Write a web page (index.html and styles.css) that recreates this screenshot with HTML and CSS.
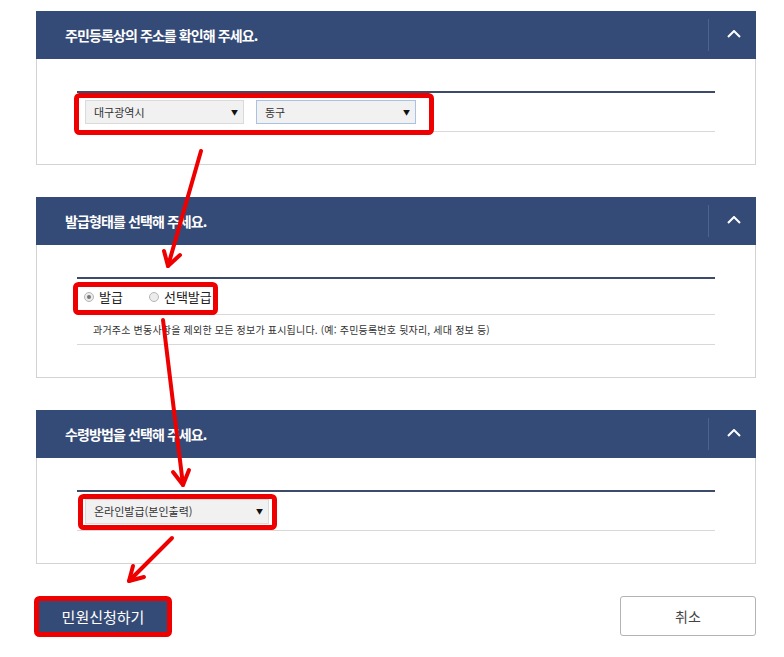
FILE: index.html
```html
<!DOCTYPE html>
<html lang="ko">
<head>
<meta charset="utf-8">
<title>민원신청</title>
<link rel="stylesheet" href="styles.css">
</head>
<body>
<div class="page">
  <section class="panel">
    <div class="panel-head">
      <h2 class="panel-title">주민등록상의 주소를 확인해 주세요.</h2>
      <div class="toggle"><svg width="14" height="8" viewBox="0 0 14 8"><polyline points="1,7 7,1 13,7" fill="none" stroke="#fff" stroke-width="2"/></svg></div>
    </div>
    <div class="panel-body">
      <div class="table">
        <div class="row row-select">
          <div class="select sel-city"><span>대구광역시</span><span class="caret">▼</span></div>
          <div class="select sel-gu focus"><span>동구</span><span class="caret">▼</span></div>
        </div>
      </div>
    </div>
  </section>

  <section class="panel">
    <div class="panel-head">
      <h2 class="panel-title">발급형태를 선택해 주세요.</h2>
      <div class="toggle"><svg width="14" height="8" viewBox="0 0 14 8"><polyline points="1,7 7,1 13,7" fill="none" stroke="#fff" stroke-width="2"/></svg></div>
    </div>
    <div class="panel-body">
      <div class="table">
        <div class="row row-radio">
          <label class="radio checked"><span class="dot"></span>발급</label>
          <label class="radio"><span class="dot"></span>선택발급</label>
        </div>
        <div class="row row-info">과거주소 변동사항을 제외한 모든 정보가 표시됩니다. (예: 주민등록번호 뒷자리, 세대 정보 등)</div>
      </div>
    </div>
  </section>

  <section class="panel">
    <div class="panel-head">
      <h2 class="panel-title">수령방법을 선택해 주세요.</h2>
      <div class="toggle"><svg width="14" height="8" viewBox="0 0 14 8"><polyline points="1,7 7,1 13,7" fill="none" stroke="#fff" stroke-width="2"/></svg></div>
    </div>
    <div class="panel-body">
      <div class="table">
        <div class="row row-select row-method">
          <div class="select sel-method"><span>온라인발급(본인출력)</span><span class="caret">▼</span></div>
        </div>
      </div>
    </div>
  </section>

  <div class="actions">
    <button class="btn btn-primary">민원신청하기</button>
    <button class="btn btn-cancel">취소</button>
  </div>

  <svg class="annot" width="784" height="657" viewBox="0 0 784 657">
    <g fill="none" stroke="#ee0000" stroke-width="5">
      <rect x="76.5" y="95.5" width="355" height="37" rx="3"/>
      <rect x="75.5" y="284.5" width="140" height="28" rx="3"/>
      <rect x="80.5" y="496.5" width="194" height="31" rx="3"/>
      <rect x="36.5" y="598.5" width="133" height="36" rx="3"/>
    </g>
    <g fill="none" stroke="#ee0000" stroke-width="4" stroke-linecap="round" stroke-linejoin="round">
      <line x1="201" y1="151" x2="168" y2="266"/>
      <polyline points="164,251 168,266 180,255"/>
      <line x1="163" y1="320" x2="183" y2="485"/>
      <polyline points="173,472 183,485 189,470"/>
      <line x1="172" y1="538" x2="129" y2="581"/>
      <polyline points="133,566 129,581 144,577"/>
    </g>
  </svg>
</div>
</body>
</html>
```

FILE: styles.css
```css
* { box-sizing: border-box; }
html, body { margin: 0; padding: 0; background: #fff; }
body {
  font-family: "Noto Sans CJK KR", "Noto Sans", sans-serif;
  color: #333;
}
.page {
  position: relative;
  width: 784px;
  height: 657px;
  padding: 11px 28px 0 36px;
}
.panel { width: 720px; margin-bottom: 32px; }
.panel-head {
  height: 48px;
  background: #354b77;
  display: flex;
  align-items: center;
  justify-content: space-between;
  padding-left: 29px;
}
.panel-title {
  margin: 0;
  color: #fff;
  font-size: 14px;
  font-weight: 700;
  letter-spacing: -0.9px;
}
.toggle {
  width: 48px;
  height: 32px;
  border-left: 1px solid #4d6290;
  display: flex;
  align-items: center;
  justify-content: center;
  padding-left: 2px;
  padding-bottom: 2px;
}
.toggle svg { display: block; }
.panel-body {
  border: 1px solid #d3d3d3;
  border-top: none;
  padding: 32px 40px 32px;
}
.table { border-top: 2px solid #3d4b6b; }
.row {
  border-bottom: 1px solid #d8d8d8;
  display: flex;
  align-items: center;
}
.row-select { height: 39px; padding-left: 8px; gap: 12px; }
.select {
  height: 24px;
  background: #f1f1f1;
  border: 1px solid #dadada;
  display: flex;
  align-items: center;
  justify-content: space-between;
  padding: 0 5px 0 8px;
  font-size: 11px;
  color: #333;
}
.select.focus { border-color: #a9c1e3; }
.caret { font-size: 7px; color: #111; }
.sel-city { width: 159px; }
.sel-gu { width: 160px; }
.row-method { height: 39px; }
.sel-method { width: 184px; height: 25px; }
.row-radio { height: 36px; padding-left: 7px; gap: 26px; }
.radio {
  display: flex;
  align-items: center;
  gap: 5px;
  font-size: 13px;
  color: #222;
}
.dot {
  width: 10px;
  height: 10px;
  border-radius: 50%;
  border: 1px solid #b5b5b5;
  background: #ececec;
  position: relative;
}
.radio.checked .dot::after {
  content: "";
  position: absolute;
  left: 2px; top: 2px;
  width: 4px; height: 4px;
  border-radius: 50%;
  background: #777;
}
.row-info {
  height: 30px;
  padding-left: 16px;
  font-size: 10px;
  color: #333;
  letter-spacing: 0.2px;
}
.actions {
  width: 720px;
  display: flex;
  justify-content: space-between;
  align-items: flex-start;
}
.btn {
  font-family: inherit;
  cursor: pointer;
  margin: 0;
}
.btn-primary {
  width: 134px;
  height: 38px;
  margin-top: 1px;
  background: #354b77;
  color: #fff;
  border: none;
  font-size: 15px;
}
.btn-cancel {
  width: 136px;
  height: 40px;
  background: #fff;
  border: 1px solid #b3b3b3;
  border-radius: 3px;
  color: #444;
  font-size: 14px;
}
.annot {
  position: absolute;
  left: 0;
  top: 0;
  pointer-events: none;
}
```
